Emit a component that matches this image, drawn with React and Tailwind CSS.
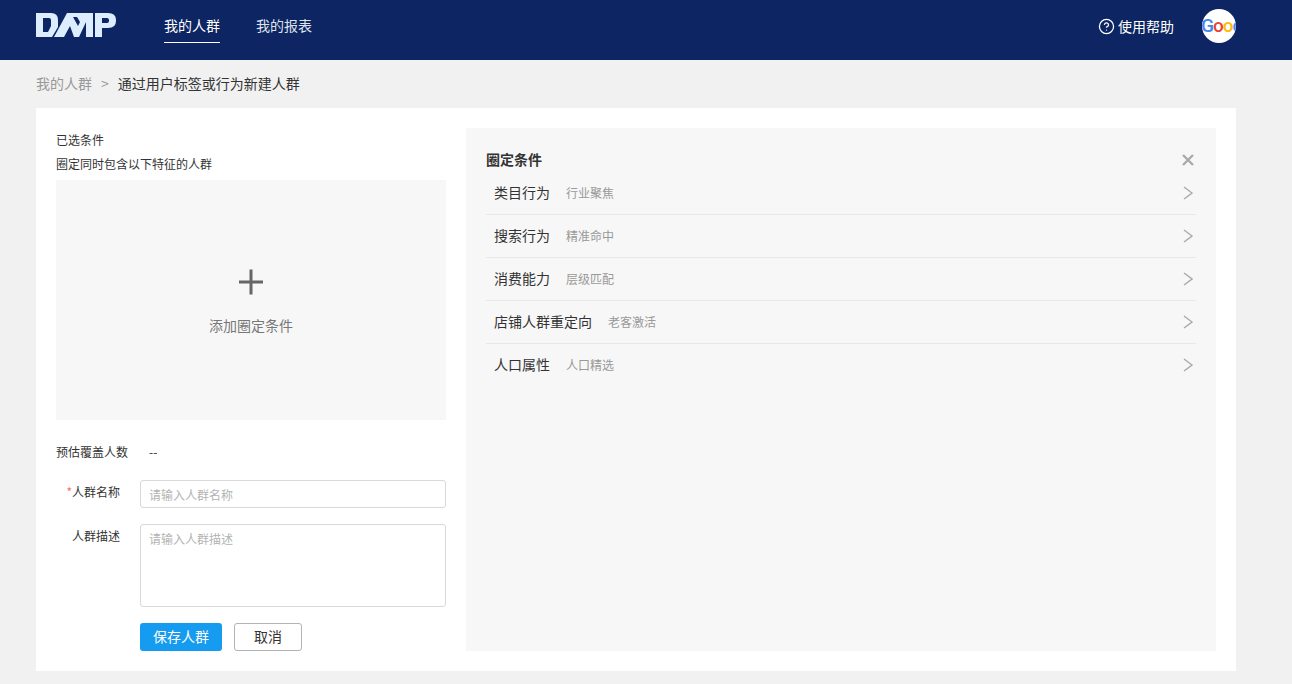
import { CircleHelp } from "lucide-react";

const groups = [
  { name: "类目行为", desc: "行业聚焦" },
  { name: "搜索行为", desc: "精准命中" },
  { name: "消费能力", desc: "层级匹配" },
  { name: "店铺人群重定向", desc: "老客激活" },
  { name: "人口属性", desc: "人口精选" },
];

const Logo = () => (
  <svg width="80" height="24" viewBox="0 0 80 24" fill="#dcedfd" fillRule="evenodd">
    <path d="M0 0H15Q22 0 22 7V14L16 24H0ZM7 5V19H12L15 13V7Q15 5 13 5Z" />
    <path d="M18 24 31 0H57V24H50V9L43 24H38L34 13 28 24ZM37 4 42 13 44 9 41 4Z" />
    <path d="M59 0H72Q80 0 80 7V8Q80 15 72 15H66V24H59ZM66 5V10H71Q73 10 73 8V7Q73 5 71 5Z" />
  </svg>
);

const Chevron = () => (
  <svg width="10" height="14" viewBox="0 0 10 14" fill="none" stroke="#a9a9a9" strokeWidth="1.4">
    <path d="M1 1l8 6-8 6" />
  </svg>
);

const Header = () => (
  <header className="h-[60px] bg-[#0d2562] flex items-start pl-9 pr-14 text-white text-sm">
    <div className="mt-[13px]"><Logo /></div>
    <nav className="flex gap-9 ml-12">
      <a className="h-[43px] flex items-center border-b border-white pt-[11px] pb-[4px]">我的人群</a>
      <a className="h-[43px] flex items-center pt-[11px] pb-[4px] text-[#dfe3ee]">我的报表</a>
    </nav>
    <div className="ml-auto h-[52px] flex items-center gap-[3px]">
      <CircleHelp size={17} strokeWidth={1.8} />
      <span>使用帮助</span>
    </div>
    <div className="ml-7 mt-[9px] w-[34px] h-[34px] rounded-full bg-white overflow-hidden flex items-center">
      <span className="-ml-[1px] text-[19px] font-medium tracking-[-1px] font-['Roboto',sans-serif] whitespace-nowrap">
        <span className="text-[#4285f4]">G</span>
        <span className="text-[#ea4335]">o</span>
        <span className="text-[#fbbc05]">o</span>
        <span className="text-[#4285f4]">g</span>
      </span>
    </div>
  </header>
);

const LeftPanel = () => (
  <div className="w-[390px] text-xs text-[#333]">
    <div className="leading-6 h-6">已选条件</div>
    <div className="leading-6 h-6">圈定同时包含以下特征的人群</div>
    <div className="mt-1 h-[240px] bg-[#f7f7f7] flex flex-col items-center">
      <svg className="mt-[89px]" width="26" height="26" viewBox="0 0 26 26" fill="#666">
        <rect x="11.5" y="0.5" width="3" height="25" />
        <rect x="1" y="11.5" width="24" height="3" />
      </svg>
      <div className="mt-[20px] text-sm leading-5 text-[#777]">添加圈定条件</div>
    </div>
    <div className="flex mt-6 leading-4">
      <span className="w-[93px]">预估覆盖人数</span>
      <span>--</span>
    </div>
    <div className="flex mt-5">
      <label className="w-[64px] text-right leading-6"><span className="text-[#f56c6c]">*</span>人群名称</label>
      <input
        className="ml-5 w-[306px] h-[28px] px-2 border border-[#d9d9d9] rounded-[3px] outline-none placeholder:text-[#b3b3b3]"
        placeholder="请输入人群名称"
      />
    </div>
    <div className="flex mt-4">
      <label className="w-[64px] text-right leading-6">人群描述</label>
      <textarea
        className="ml-5 w-[306px] h-[83px] px-2 py-1.5 border border-[#d9d9d9] rounded-[3px] outline-none resize-none placeholder:text-[#b3b3b3]"
        placeholder="请输入人群描述"
      />
    </div>
    <div className="flex gap-3 ml-[84px] mt-4">
      <button className="w-[82px] h-[28px] rounded-[3px] bg-[#159bef] text-white text-sm pb-0.5">保存人群</button>
      <button className="w-[68px] h-[28px] rounded-[3px] border border-[#b3b3b3] bg-white text-sm pb-0.5">取消</button>
    </div>
  </div>
);

const RightPanel = () => (
  <div className="w-[750px] bg-[#f7f7f7] px-5 pt-[22px] text-[#333]">
    <div className="flex items-center justify-between h-5">
      <h3 className="text-sm font-bold leading-[18px] h-5">圈定条件</h3>
      <svg className="mr-[2px]" width="12" height="12" viewBox="0 0 12 12" stroke="#aaa" strokeWidth="2.4">
        <path d="M1 1l10 10M11 1 1 11" />
      </svg>
    </div>
    <ul className="mt-[2px]">
      {groups.map((g, i) => (
        <li
          key={g.name}
          className={`h-[43px] pl-2 pr-[3px] flex items-center border-b ${i < groups.length - 1 ? "border-[#e8e8e8]" : "border-transparent"}`}
        >
          <span className="text-sm leading-[18px] pb-[3px]">{g.name}</span>
          <span className="ml-4 text-xs text-[#999]">{g.desc}</span>
          <span className="ml-auto"><Chevron /></span>
        </li>
      ))}
    </ul>
  </div>
);

export default function App() {
  return (
    <div className="min-h-screen bg-[#f1f1f1] font-['Noto_Sans_CJK_SC',sans-serif]">
      <Header />
      <main className="px-9">
        <div className="h-12 flex items-center text-sm pb-0.5">
          <span className="text-[#999]">我的人群</span>
          <span className="ml-[9px] mr-[9px] text-[#999] text-sm">&gt;</span>
          <span className="text-[#333]">通过用户标签或行为新建人群</span>
        </div>
        <section className="w-[1200px] bg-white p-5 flex gap-5">
          <LeftPanel />
          <RightPanel />
        </section>
      </main>
    </div>
  );
}
